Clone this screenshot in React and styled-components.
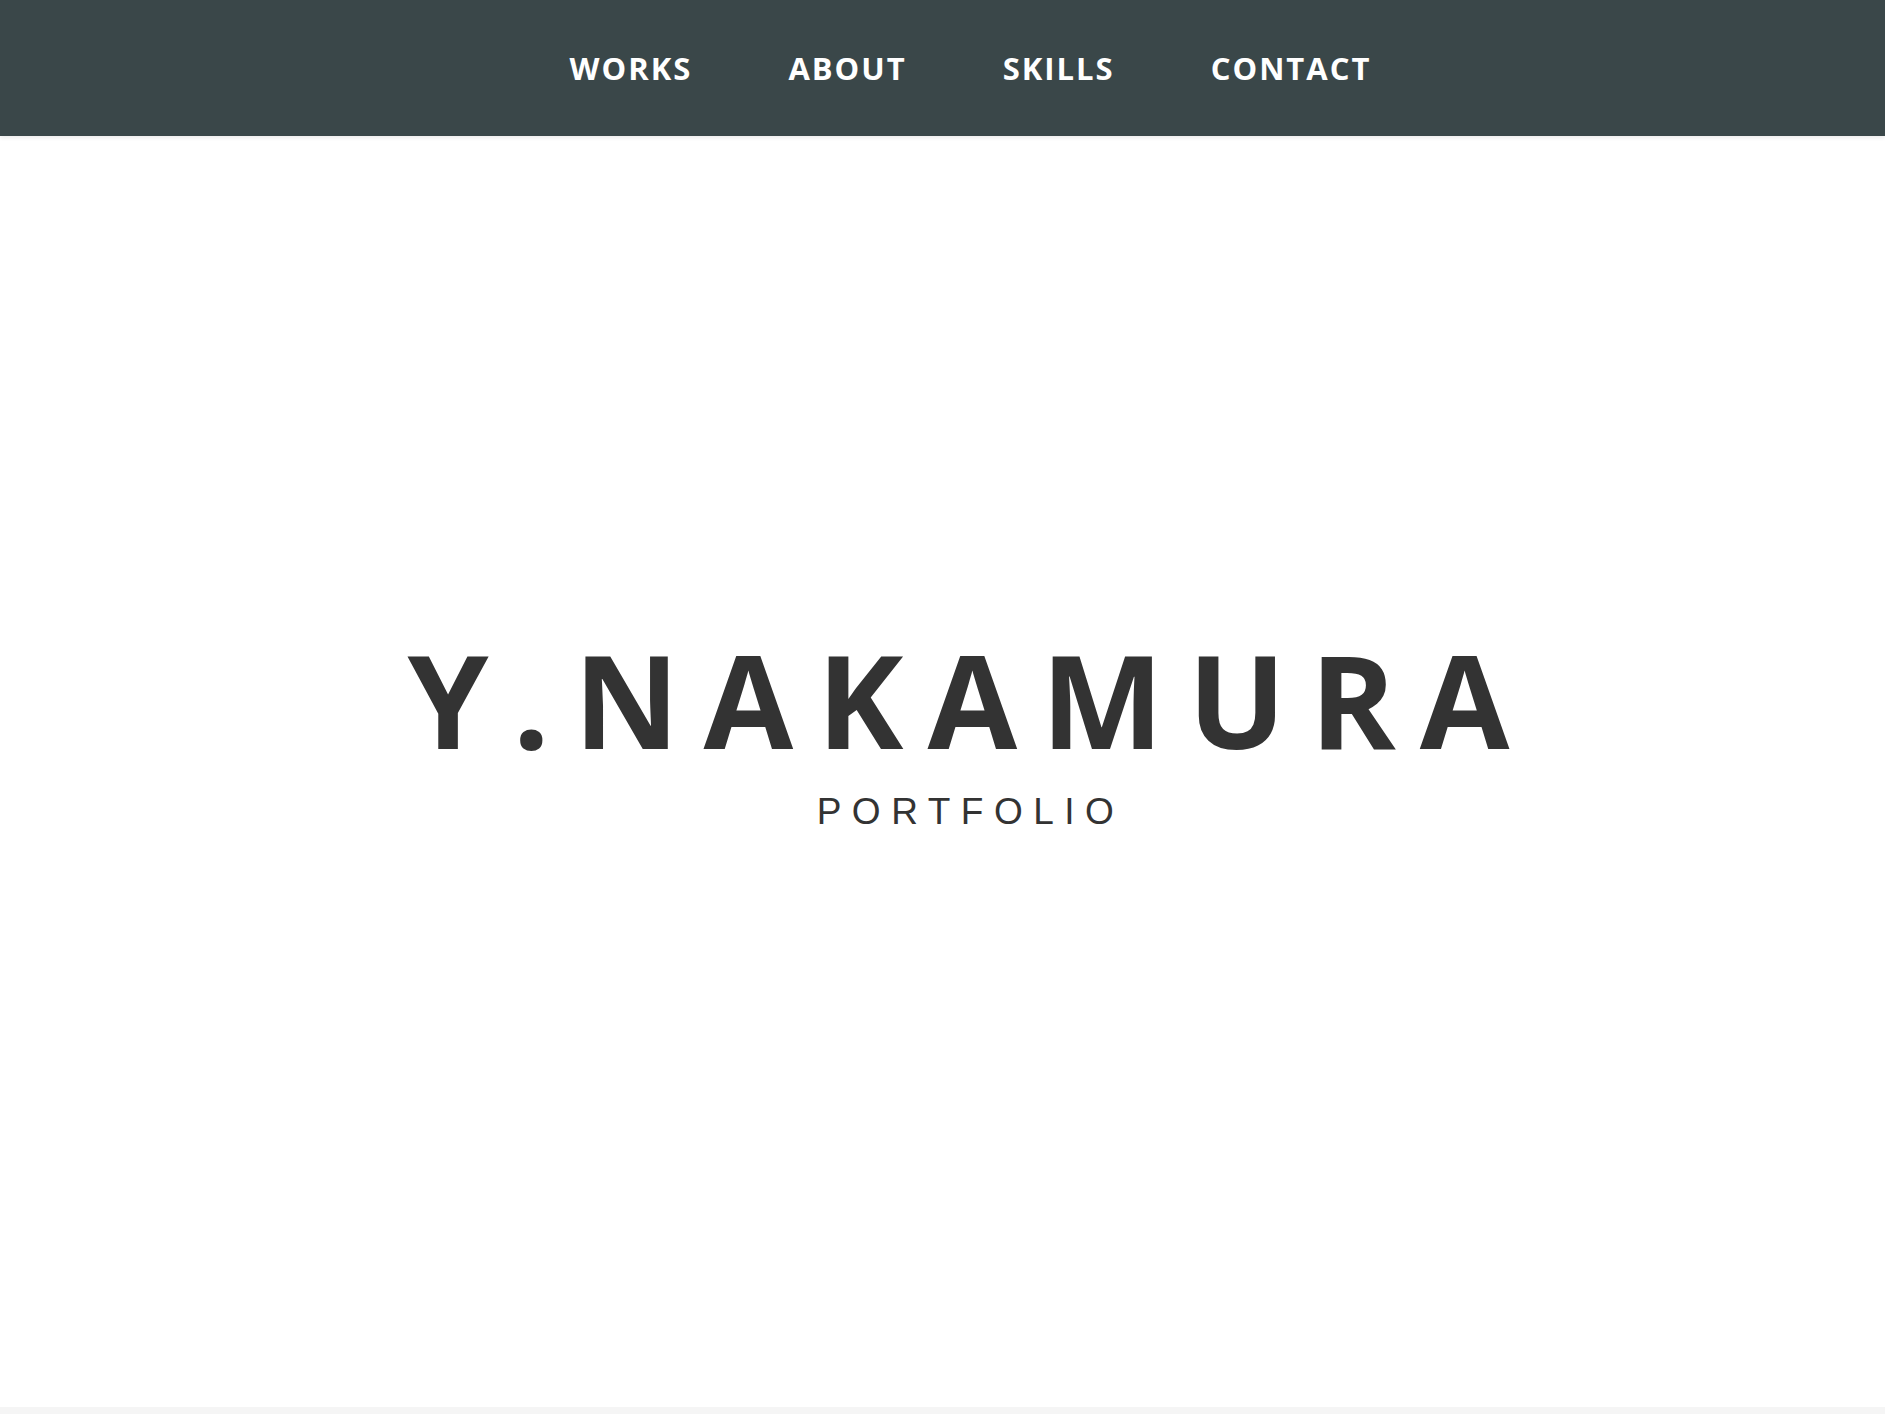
import React from "react";
import styled, { createGlobalStyle } from "styled-components";

const Global = createGlobalStyle`
  html, body { margin: 0; padding: 0; }
  body {
    background: #f5f5f5;
    font-family: "Open Sans", "Liberation Sans", sans-serif;
    color: #333;
  }
`;

const Header = styled.header`
  height: 136px;
  background: #3a4749;
  box-shadow: 0 2px 4px rgba(0, 0, 0, 0.08);
  display: flex;
  align-items: center;
  justify-content: center;
  padding-left: 56px;
  box-sizing: border-box;
  position: relative;
  z-index: 1;
`;

const Nav = styled.nav`
  display: flex;
  gap: 96px;
`;

const NavLink = styled.a`
  font-family: "Open Sans", sans-serif;
  font-weight: 700;
  font-size: 31px;
  line-height: 1;
  letter-spacing: 2px;
  color: #ffffff;
  text-decoration: none;
  text-transform: uppercase;
`;

const Hero = styled.main`
  height: 1271px;
  background: #ffffff;
  display: flex;
  flex-direction: column;
  align-items: center;
  justify-content: center;
  padding-left: 56px;
  padding-bottom: 80px;
  box-sizing: border-box;
`;

const Title = styled.h1`
  margin: 0;
  font-family: "Open Sans", sans-serif;
  font-weight: 700;
  font-size: 130px;
  line-height: 1;
  letter-spacing: 24px;
  color: #333333;
`;

const Subtitle = styled.p`
  margin: 29px 0 0;
  font-family: "Liberation Sans", Arial, sans-serif;
  font-weight: 400;
  font-size: 37px;
  line-height: 1;
  letter-spacing: 10.5px;
  color: #333333;
`;

export default function App() {
  return (
    <>
      <Global />
      <Header>
        <Nav>
          <NavLink href="#works">Works</NavLink>
          <NavLink href="#about">About</NavLink>
          <NavLink href="#skills">Skills</NavLink>
          <NavLink href="#contact">Contact</NavLink>
        </Nav>
      </Header>
      <Hero>
        <Title>Y.NAKAMURA</Title>
        <Subtitle>PORTFOLIO</Subtitle>
      </Hero>
    </>
  );
}
